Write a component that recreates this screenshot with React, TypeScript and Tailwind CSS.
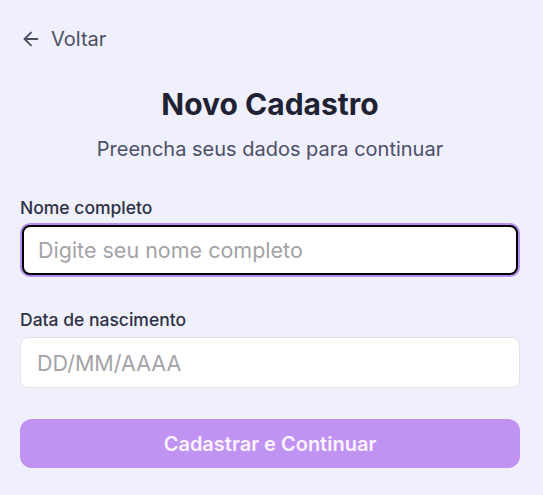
import React, { useState } from 'react';

const App: React.FC = () => {
  const [nome, setNome] = useState('');
  const [data, setData] = useState('');

  return (
    <div
      className="min-h-[495px] w-full bg-[#f0effc] px-5 pt-[26px]"
      style={{ fontFamily: 'Inter, "Noto Sans", sans-serif' }}
    >
      <button className="flex items-center gap-[9px] text-[20px] leading-[26px] text-[#4b4f63]">
        <svg width="22" height="22" viewBox="0 0 24 24" fill="none" stroke="currentColor" strokeWidth="2" strokeLinecap="round" strokeLinejoin="round">
          <path d="M19 12H5" />
          <path d="M12 19l-7-7 7-7" />
        </svg>
        Voltar
      </button>

      <div className="w-[500px]">
        <h1 className="mt-[34px] text-center text-[30px] font-bold leading-9 text-[#1f2233]">Novo Cadastro</h1>
        <p className="mt-[13px] text-center text-[20px] leading-7 text-[#4b5066]">Preencha seus dados para continuar</p>

        <form className="mt-[32px] flex flex-col" onSubmit={(e) => e.preventDefault()}>
          <label className="text-[17.5px] font-medium leading-[26px] text-[#2e3244]">Nome completo</label>
          <input
            autoFocus
            value={nome}
            onChange={(e) => setNome(e.target.value)}
            placeholder="Digite seu nome completo"
            className="mx-[2px] mt-[4px] h-[50px] rounded-lg border-2 border-black bg-white px-[14px] text-[21.5px] outline-none ring-2 ring-[#b48ef0] placeholder:text-[#a3a3a8]"
          />

          <label className="mt-[32px] text-[17.5px] font-medium leading-[26px] text-[#2e3244]">Data de nascimento</label>
          <input
            value={data}
            onChange={(e) => setData(e.target.value)}
            placeholder="DD/MM/AAAA"
            className="mt-[4px] h-[51px] w-full rounded-lg border border-[#e1e1e8] bg-white px-4 text-[21.5px] outline-none placeholder:text-[#a3a3a8]"
          />

          <button
            type="submit"
            className="mt-[31px] h-[49px] w-full rounded-xl bg-[#c092f2] text-[20px] font-semibold text-[#fbf3ff]"
          >
            Cadastrar e Continuar
          </button>
        </form>
      </div>
    </div>
  );
};

export default App;
